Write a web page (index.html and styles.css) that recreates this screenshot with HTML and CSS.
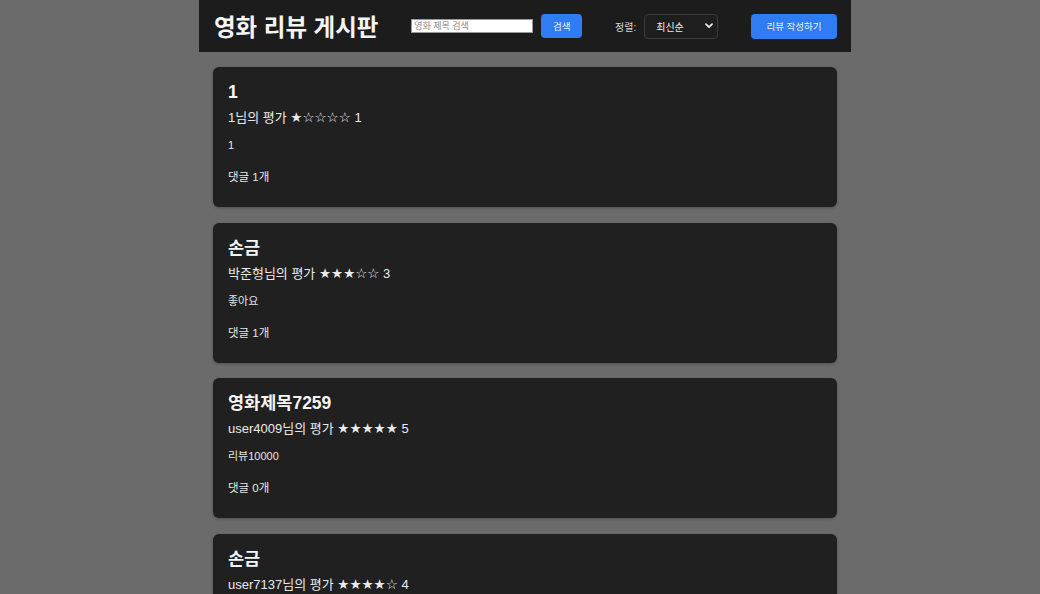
FILE: index.html
```html
<!DOCTYPE html>
<html lang="ko">
<head>
<meta charset="utf-8">
<title>영화 리뷰 게시판</title>
<link rel="stylesheet" href="styles.css">
</head>
<body>
<div class="page">
  <header class="topbar">
    <h1 class="brand">영화 리뷰 게시판</h1>
    <form class="search" onsubmit="return false">
      <input class="search-input" type="text" placeholder="영화 제목 검색">
      <button class="btn btn-search" type="button">검색</button>
    </form>
    <div class="sort">
      <label class="sort-label">정렬:</label>
      <div class="select">
        <span>최신순</span>
        <svg class="chev" width="8" height="6" viewBox="0 0 8 6"><path d="M1 1.2 L4 4.2 L7 1.2" fill="none" stroke="#e8e8e8" stroke-width="1.8" stroke-linecap="round" stroke-linejoin="round"/></svg>
      </div>
    </div>
    <button class="btn btn-write" type="button">리뷰 작성하기</button>
  </header>

  <main class="list">
    <article class="card">
      <h3 class="card-title">1</h3>
      <p class="meta">1님의 평가 <span class="stars">★☆☆☆☆</span> 1</p>
      <p class="content">1</p>
      <p class="comments">댓글 1개</p>
    </article>
    <article class="card">
      <h3 class="card-title">손금</h3>
      <p class="meta">박준형님의 평가 <span class="stars">★★★☆☆</span> 3</p>
      <p class="content">좋아요</p>
      <p class="comments">댓글 1개</p>
    </article>
    <article class="card">
      <h3 class="card-title">영화제목7259</h3>
      <p class="meta">user4009님의 평가 <span class="stars">★★★★★</span> 5</p>
      <p class="content">리뷰10000</p>
      <p class="comments">댓글 0개</p>
    </article>
    <article class="card">
      <h3 class="card-title">손금</h3>
      <p class="meta">user7137님의 평가 <span class="stars">★★★★☆</span> 4</p>
    </article>
  </main>
</div>
</body>
</html>
```

FILE: styles.css
```css
* { box-sizing: border-box; }
html, body {
  margin: 0;
  height: 100%;
}
body {
  background: #6b6b6b;
  font-family: "Liberation Sans", "Noto Sans CJK KR", sans-serif;
  color: #f0f0f0;
  padding-left: 10px;
  overflow: hidden;
}
.page {
  width: 652px;
  margin: 0 auto;
}
.topbar {
  height: 52px;
  background: #1c1c1c;
  display: flex;
  align-items: center;
  justify-content: space-between;
  padding: 0 14px 0 15px;
}
.brand {
  margin: 0;
  font-size: 23.5px;
  font-weight: 700;
  color: #f4f4f4;
}
.search {
  display: flex;
  align-items: center;
  gap: 8px;
  margin: 0;
}
.search-input {
  width: 122px;
  height: 14px;
  border: 1px solid #999;
  background: #fff;
  padding: 0 2px;
  font-size: 9px;
  font-family: inherit;
  outline: none;
}
.search-input::placeholder { color: #8a8a8a; }
.btn {
  border: none;
  background: #2f7cf3;
  color: #eef4ff;
  font-family: inherit;
  font-size: 9.5px;
  border-radius: 4px;
  cursor: pointer;
}
.btn-search {
  width: 41px;
  height: 24px;
}
.sort {
  display: flex;
  align-items: center;
  gap: 8px;
}
.sort-label {
  font-size: 10px;
  color: #d8d8d8;
}
.select {
  width: 74px;
  height: 25px;
  border: 1px solid #3a3a3a;
  border-radius: 4px;
  background: #1e1e1e;
  display: flex;
  align-items: center;
  justify-content: space-between;
  padding: 0 4px 0 11px;
  font-size: 10px;
  color: #eee;
}
.btn-write {
  width: 86px;
  height: 25px;
}
.list {
  display: flex;
  flex-direction: column;
  gap: 15.5px;
  padding: 15px 14px;
}
.card {
  background: #202020;
  border-radius: 6px;
  height: 140px;
  padding: 15px 15px 0 15px;
  box-shadow: 0 1px 3px rgba(0,0,0,0.25);
}
.card-title {
  margin: 0;
  font-size: 17.5px;
  line-height: 20px;
  font-weight: 700;
  color: #f6f6f6;
}
.meta {
  margin: 6px 0 0;
  font-size: 13px;
  line-height: 18px;
  color: #eaeaea;
}
.stars {
  font-family: "DejaVu Sans", sans-serif;
  font-size: 13.5px;
}
.content {
  margin: 11px 0 0;
  font-size: 11px;
  line-height: 14px;
  color: #e6e6e6;
}
.comments {
  margin: 18px 0 0;
  font-size: 11.5px;
  line-height: 14px;
  color: #e6e6e6;
}
```
